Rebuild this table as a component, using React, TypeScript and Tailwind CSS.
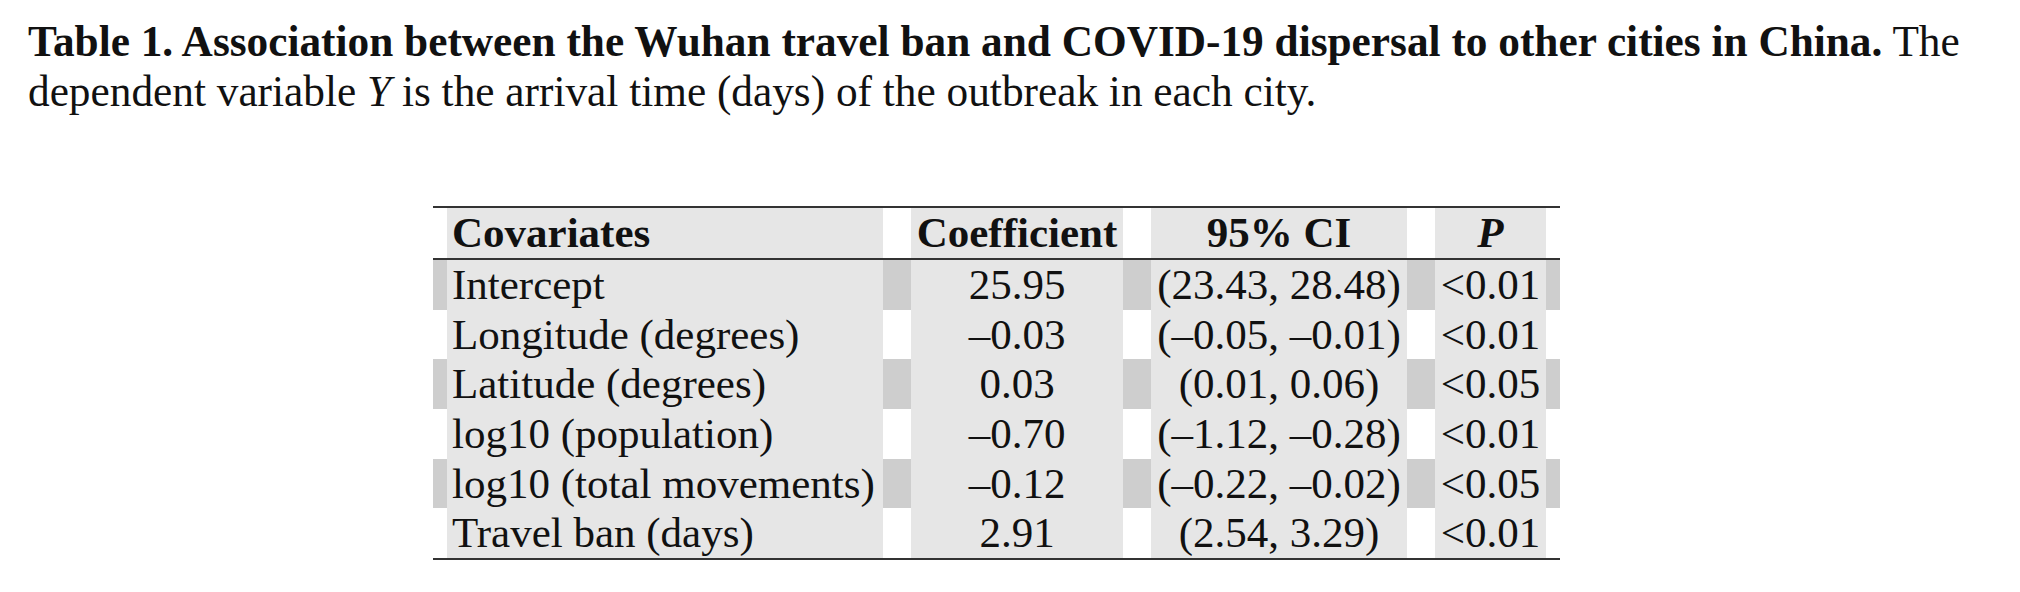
import React from "react";

type Row = { name: string; coef: string; ci: string; p: string };

const rows: Row[] = [
  { name: "Intercept", coef: "25.95", ci: "(23.43, 28.48)", p: "<0.01" },
  { name: "Longitude (degrees)", coef: "–0.03", ci: "(–0.05, –0.01)", p: "<0.01" },
  { name: "Latitude (degrees)", coef: "0.03", ci: "(0.01, 0.06)", p: "<0.05" },
  { name: "log10 (population)", coef: "–0.70", ci: "(–1.12, –0.28)", p: "<0.01" },
  { name: "log10 (total movements)", coef: "–0.12", ci: "(–0.22, –0.02)", p: "<0.05" },
  { name: "Travel ban (days)", coef: "2.91", ci: "(2.54, 3.29)", p: "<0.01" },
];

function Cell({
  children,
  shaded,
  left,
  header,
}: {
  children: React.ReactNode;
  shaded: boolean;
  left?: boolean;
  header?: boolean;
}) {
  const pad = shaded ? "w-[14px] bg-[#cecece]" : "w-[14px] bg-white";
  return (
    <div className={header ? "flex h-[50px] leading-[50px]" : "flex h-[49.67px] leading-[49.67px]"}>
      <div className={pad} />
      <div
        className={
          left
            ? "flex-1 bg-[#e6e6e6] pl-[5px] whitespace-nowrap"
            : "flex-1 bg-[#e6e6e6] text-center whitespace-nowrap"
        }
      >
        {children}
      </div>
      <div className={pad} />
    </div>
  );
}

const Rule = () => <div className="h-[2px] bg-[#333333]" />;

export default function App() {
  return (
    <div className="w-[2020px] h-[592px] bg-white text-[#111] font-['Liberation_Serif','Times_New_Roman',serif]">
      {/* Caption */}
      <div className="pl-[28px] pt-[16px] text-[43.3px] leading-[50px]">
        <div className="whitespace-nowrap">
          <span className="font-bold">
            Table 1. Association between the Wuhan travel ban and COVID-19 dispersal to other cities in China.
          </span>{" "}
          The
        </div>
        <div className="whitespace-nowrap">
          dependent variable <i>Y</i> is the arrival time (days) of the outbreak in each city.
        </div>
      </div>

      {/* Table */}
      <div className="ml-[433px] mt-[90px] w-[1127px] text-[43px]">
        <Rule />
        <div className="grid grid-cols-[464px_240px_284px_139px] font-bold">
          <Cell shaded={false} left header>
            Covariates
          </Cell>
          <Cell shaded={false} header>
            Coefficient
          </Cell>
          <Cell shaded={false} header>
            95% CI
          </Cell>
          <Cell shaded={false} header>
            <i>P</i>
          </Cell>
        </div>
        <Rule />
        {rows.map((r, i) => {
          const shaded = i % 2 === 0;
          return (
            <div key={r.name} className="grid grid-cols-[464px_240px_284px_139px]">
              <Cell shaded={shaded} left>
                {r.name}
              </Cell>
              <Cell shaded={shaded}>{r.coef}</Cell>
              <Cell shaded={shaded}>{r.ci}</Cell>
              <Cell shaded={shaded}>{r.p}</Cell>
            </div>
          );
        })}
        <Rule />
      </div>
    </div>
  );
}
